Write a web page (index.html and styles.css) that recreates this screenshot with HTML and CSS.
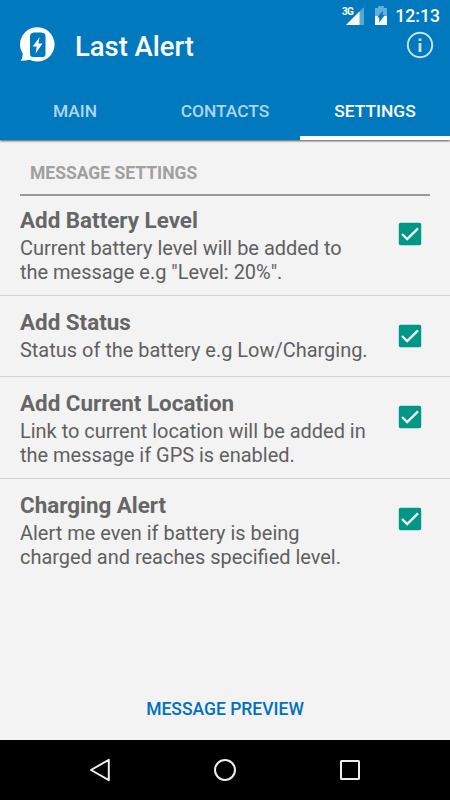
FILE: index.html
```html
<!DOCTYPE html>
<html lang="en">
<head>
<meta charset="utf-8">
<title>Last Alert</title>
<link rel="stylesheet" href="styles.css">
</head>
<body>
<div class="screen">
  <header class="top">
    <div class="status">
      <svg class="signal" width="24" height="20" viewBox="0 0 24 20"><path d="M22 1V19H4Z" fill="#fff" opacity=".35"/><path d="M17.500 5.500V19H4Z" fill="#fff"/></svg>
      <span class="net">3G</span>
      <svg class="battery" width="14" height="20" viewBox="0 0 14 20"><path d="M1 2H4.200V0H9.800V2H13V10H1Z" fill="#fff" opacity=".4"/><path d="M1 10H13V19H1Z" fill="#fff"/><path d="M8.800 4.500V9H10.800L5.200 16.500V11.500H3.200Z" fill="#0079bf"/></svg>
      <span class="clock">12:13</span>
    </div>
    <div class="appbar">
      <svg class="logo" width="37" height="36" viewBox="0 0 37 36"><path d="M18.700.200A17.200 17.200 0 1 1 10.500 32.700Q6 33.800 1.500 33.700Q3.700 31.700 3.700 26.500A17.200 17.200 0 0 1 18.700.200Z" fill="#fff"/><path d="M14 6.500V6H23V6.500H24Q26 6.500 26 8.500V27.500Q26 29.500 24 29.500H13.500Q11.500 29.500 11.500 27.500V8.500Q11.500 6.500 14 6.500Z" fill="#0079bf" stroke="#0079bf"/><path d="M20.600 10L13.700 19.600H17.700L16.600 26.500L23.500 16.500H19.500Z" fill="#fff"/></svg>
      <h1>Last Alert</h1>
      <svg class="info" width="28" height="28" viewBox="0 0 28 28"><circle cx="14" cy="14" r="12.200" fill="none" stroke="#cce4f2" stroke-width="1.900"/><path d="M12.600 7.500H15.400V10H12.600ZM12.600 12H15.400V21H12.600Z" fill="#cce4f2"/></svg>
    </div>
    <nav class="tabs">
      <span class="tab">MAIN</span>
      <span class="tab">CONTACTS</span>
      <span class="tab active">SETTINGS</span>
    </nav>
  </header>
  <main>
    <h2>MESSAGE SETTINGS</h2>
    <section class="row">
      <div><h3>Add Battery Level</h3><p>Current battery level will be added to<br>the message e.g "Level: 20%".</p></div>
      <svg class="check" width="24" height="24" viewBox="0 0 24 24"><rect x=".800" y=".800" width="22.400" height="22.400" rx="1.800" fill="#009688"/><path d="M4 12L9.200 17L20 6.400" fill="none" stroke="#f3f3f3" stroke-width="2.400"/></svg>
    </section>
    <section class="row">
      <div><h3>Add Status</h3><p>Status of the battery e.g Low/Charging.</p></div>
      <svg class="check" width="24" height="24" viewBox="0 0 24 24"><rect x=".800" y=".800" width="22.400" height="22.400" rx="1.800" fill="#009688"/><path d="M4 12L9.200 17L20 6.400" fill="none" stroke="#f3f3f3" stroke-width="2.400"/></svg>
    </section>
    <section class="row">
      <div><h3>Add Current Location</h3><p>Link to current location will be added in<br>the message if GPS is enabled.</p></div>
      <svg class="check" width="24" height="24" viewBox="0 0 24 24"><rect x=".800" y=".800" width="22.400" height="22.400" rx="1.800" fill="#009688"/><path d="M4 12L9.200 17L20 6.400" fill="none" stroke="#f3f3f3" stroke-width="2.400"/></svg>
    </section>
    <section class="row">
      <div><h3>Charging Alert</h3><p>Alert me even if battery is being<br>charged and reaches specified level.</p></div>
      <svg class="check" width="24" height="24" viewBox="0 0 24 24"><rect x=".800" y=".800" width="22.400" height="22.400" rx="1.800" fill="#009688"/><path d="M4 12L9.200 17L20 6.400" fill="none" stroke="#f3f3f3" stroke-width="2.400"/></svg>
    </section>
    <div class="preview">MESSAGE PREVIEW</div>
  </main>
  <footer class="navbar">
    <svg width="30" height="30" viewBox="0 0 30 30"><path d="M23.800 4.800V25.200L6 15Z"/></svg>
    <svg width="30" height="30" viewBox="0 0 30 30"><circle cx="15" cy="15" r="10"/></svg>
    <svg width="30" height="30" viewBox="0 0 30 30"><rect x="6" y="6" width="18" height="18" rx=".500"/></svg>
  </footer>
</div>
</body>
</html>
```
FILE: styles.css
```css
* { box-sizing: border-box; margin: 0; padding: 0; }
body { font-family: Roboto, "Liberation Sans", sans-serif; background: #f3f3f3; }
svg { display: block; flex: none; }
.screen { width: 450px; height: 800px; display: flex; flex-direction: column; overflow: hidden; }
.top { height: 140px; background: #0079bf; color: #fff; box-shadow: 0 1px 2px rgba(0,0,0,.65); position: relative; flex: none; }
.status { height: 30px; display: flex; justify-content: flex-end; align-items: center; padding: 2px 10px 0 0; position: relative; }
.signal { margin: 0 8px 0 0; }
.net { position: absolute; left: 342px; top: 6px; font-size: 10px; line-height: 11px; font-weight: 700; letter-spacing: -.7px; }
.battery { margin-right: 7px; }
.clock { font-size: 17.6px; line-height: 24px; font-weight: 500; width: 45px; text-align: right; white-space: nowrap; }
.appbar { height: 50px; display: flex; align-items: flex-start; padding: 0 16px 0 19px; }
.logo { margin-top: -3px; }
h1 { margin-left: 19px; padding-top: 1px; font-size: 27.4px; line-height: 32px; font-weight: 500; flex: 1; white-space: nowrap; }
.info { margin-top: 1px; }
.tabs { height: 60px; display: flex; }
.tab { flex: 1; text-align: center; font-size: 17.4px; line-height: 62px; font-weight: 500; color: rgba(255,255,255,.7); }
.tab.active { height: 60px; color: #fff; border-bottom: 4px solid #fff; }
main { flex: 1; display: flex; flex-direction: column; }
h2 { margin: 0 20px; padding: 23px 10px 0; height: 56px; border-bottom: 2px solid #999; font-size: 17.5px; line-height: 21px; font-weight: 700; color: #a0a0a0; }
.row { display: flex; justify-content: space-between; padding: 12px 28px 0 20px; height: 102px; border-bottom: 1px solid #d2d2d2; }
h2 + .row { height: 100px; padding-top: 10px; }
.row:nth-of-type(2) { height: 81px; }
.row:nth-of-type(4) { border: 0; }
h3 { font-size: 22.4px; line-height: 28px; font-weight: 700; color: #666; white-space: nowrap; }
p { margin-top: 2px; font-size: 19.97px; line-height: 24px; color: #606060; white-space: nowrap; }
.check { margin-top: 16px; }
.preview { margin-top: auto; text-align: center; height: 42px; font-size: 17.5px; line-height: 22px; font-weight: 500; color: #0071bc; }
.navbar { height: 60px; flex: none; background: #000; display: flex; justify-content: space-between; align-items: center; padding: 0 85px; }
.navbar svg { fill: none; stroke: #eee; stroke-width: 2; stroke-linejoin: round; }
```
